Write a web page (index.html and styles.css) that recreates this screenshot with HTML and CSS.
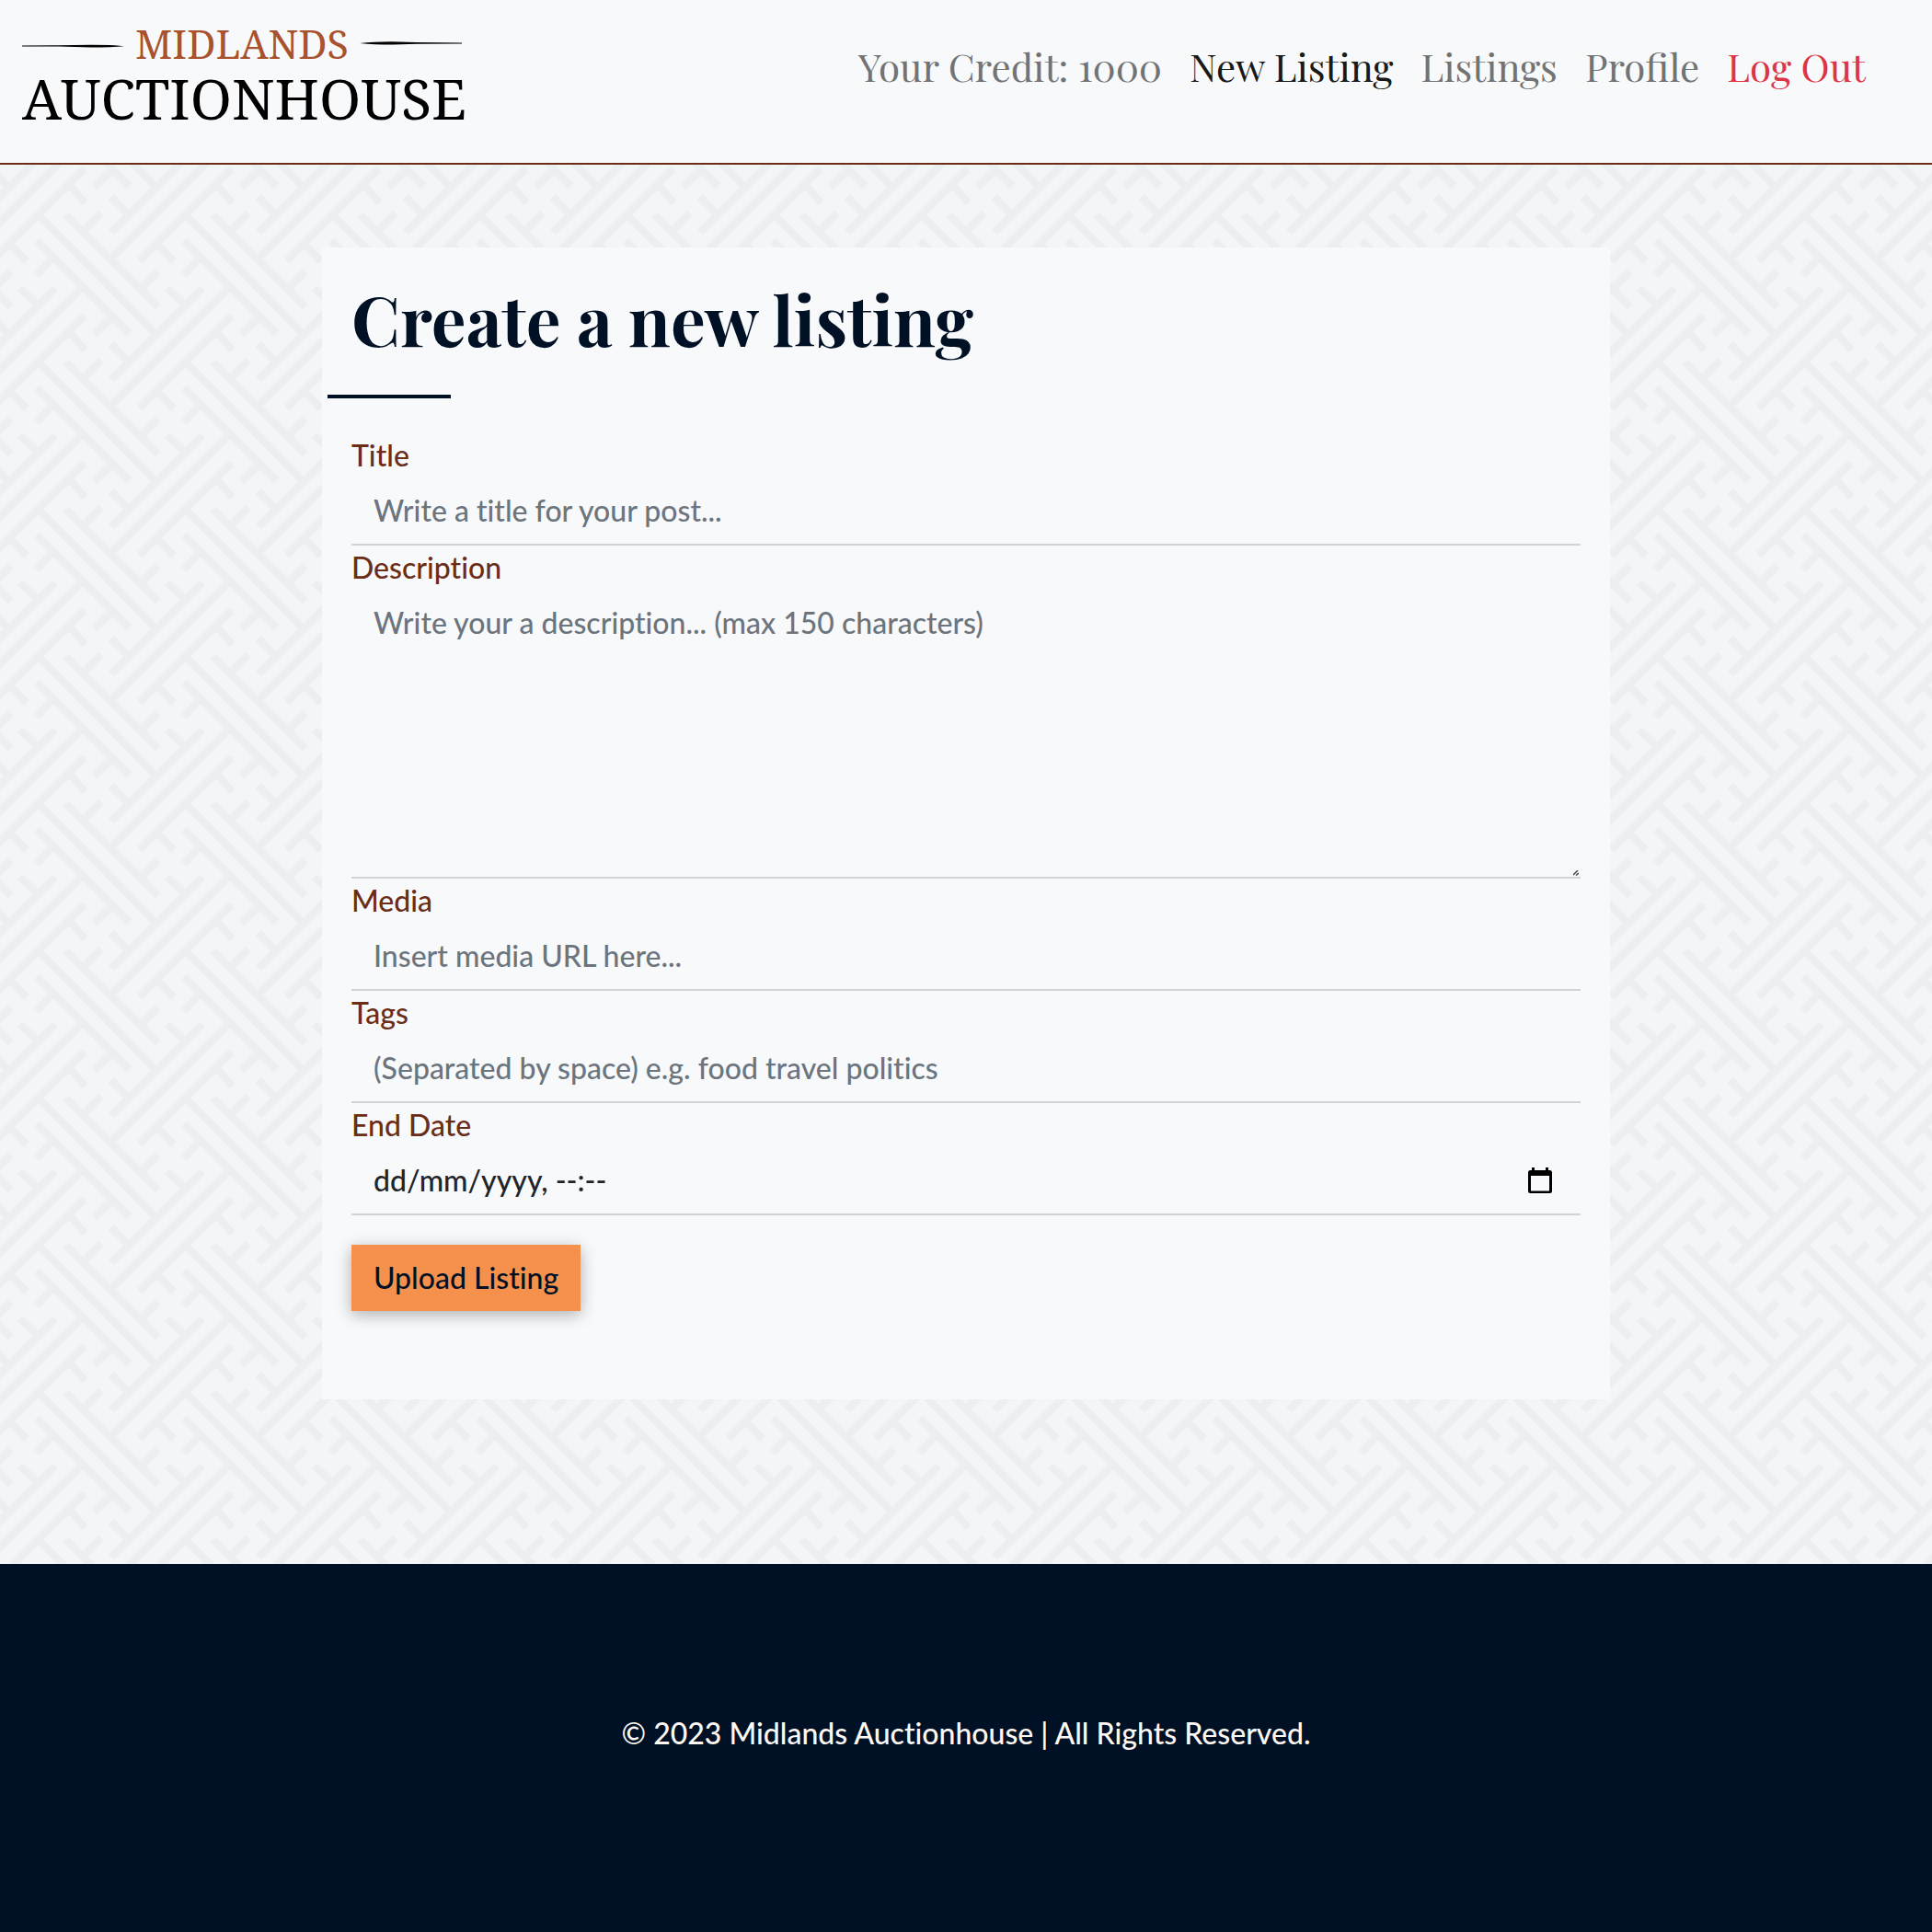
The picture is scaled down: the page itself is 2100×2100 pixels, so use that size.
FILE: index.html
```html
<!DOCTYPE html>
<html lang="en-GB">
<head>
<meta charset="utf-8">
<meta name="viewport" content="width=device-width, initial-scale=1">
<title>Midlands Auctionhouse | New Listing</title>
<link rel="stylesheet" href="styles.css">
</head>
<body>
<header class="site-header">
  <a class="logo" href="#">
    <span class="logo-top">
      <svg class="logo-rule" viewBox="0 0 111 8" aria-hidden="true"><path d="M0 5.6 L0 6.400 L40 6.600 L75 7.600 Q97 7.400 111 6.200 Q97 4.800 75 4.800 L40 5.200 Z"/></svg>
      <span class="logo-name">MIDLANDS</span>
      <svg class="logo-rule" viewBox="0 0 111 8" aria-hidden="true"><path d="M0 3 Q14 1.400 34 1.200 L62 2 L111 2.600 L111 3.400 L62 3.800 L36 4.600 Q16 4.600 0 3 Z"/></svg>
    </span>
    <span class="logo-main">AUCTIONHOUSE</span>
  </a>
  <nav class="site-nav">
    <span class="nav-item">Your Credit: 1000</span>
    <a class="nav-item nav-active" href="#">New Listing</a>
    <a class="nav-item" href="#">Listings</a>
    <a class="nav-item" href="#">Profile</a>
    <a class="nav-item nav-logout" href="#">Log Out</a>
  </nav>
</header>
<main class="page">
  <section class="card">
    <h1 class="card-title">Create a new listing</h1>
    <form class="listing-form">
      <label class="label" for="title">Title</label>
      <input class="control" id="title" type="text" placeholder="Write a title for your post...">
      <label class="label" for="description">Description</label>
      <textarea class="control control-area" id="description" placeholder="Write your a description... (max 150 characters)"></textarea>
      <label class="label" for="media">Media</label>
      <input class="control" id="media" type="text" placeholder="Insert media URL here...">
      <label class="label" for="tags">Tags</label>
      <input class="control" id="tags" type="text" placeholder="(Separated by space) e.g. food travel politics">
      <label class="label" for="end-date">End Date</label>
      <div class="date-field">
        <input class="control control-date" id="end-date" type="text" placeholder="dd/mm/yyyy, --:--">
        <button class="date-button" type="button" aria-label="Pick a date">
          <svg class="date-icon" viewBox="0 0 26 28" aria-hidden="true"><path fill-rule="evenodd" d="M4 0H7V3H19V0H22V3H23.500Q26 3 26 5.500V25.500Q26 28 23.500 28H2.500Q0 28 0 25.500V5.500Q0 3 2.500 3H4ZM3 9V25.500H23V9Z"/></svg>
        </button>
      </div>
      <button class="submit" type="submit">Upload Listing</button>
    </form>
  </section>
</main>
<footer class="site-footer">
  <p class="copyright">© 2023 Midlands Auctionhouse | All Rights Reserved.</p>
</footer>
</body>
</html>
```
FILE: styles.css
```css
* { box-sizing: border-box; }

body {
  margin: 0;
  min-height: 100vh;
  display: flex;
  flex-direction: column;
  font-family: Lato, "Liberation Sans", sans-serif;
  font-size: 32px;
  font-weight: 500;
  font-variant-ligatures: none;
  line-height: 48px;
  color: #001125;
  background-color: #f4f5f7;
  background-image: url("data:image/svg+xml,%3Csvg xmlns='http://www.w3.org/2000/svg' xmlns:xlink='http://www.w3.org/1999/xlink' width='160' height='160' viewBox='0 0 480 480'%3E%3Cdefs%3E%3Cpath id='p' fill='none' stroke='%23edeef0' stroke-width='25' d='M745 430L365 810M215 190L515 490M275 240L330 185M460 430L515 375M125 190L505 575M275 40L-25 340M225 90L277 152M515 290L567 342M660 430L363 727M545 430L600 480M362 612L415 665M120 275L422 577M172 330L120 387M365 525L308 580'/%3E%3C/defs%3E%3Cuse xlink:href='%23p'/%3E%3Cuse xlink:href='%23p' x='-480'/%3E%3Cuse xlink:href='%23p' x='480'/%3E%3Cuse xlink:href='%23p' y='-480'/%3E%3Cuse xlink:href='%23p' x='-480' y='-480'/%3E%3Cuse xlink:href='%23p' x='480' y='-480'/%3E%3C/svg%3E");
  background-position: 0 10px;
  background-size: 160px 160px;
}

a { color: inherit; text-decoration: none; }

.site-header {
  display: flex;
  justify-content: space-between;
  align-items: flex-start;
  padding: 22px 72px 38px 24px;
  background: #f8f9fb;
  border-bottom: 2px solid #6b2d17;
  font-family: "Playfair Display", "Liberation Serif", serif;
  font-weight: 400;
  font-variant-ligatures: normal;
}

.logo {
  display: flex;
  flex-direction: column;
  width: 478px;
  font-family: "Noto Serif", "Liberation Serif", serif;
  color: #000;
}

.logo-top {
  display: flex;
  justify-content: space-between;
  align-items: center;
}

.logo-rule { width: 111px; height: 8px; }

.logo-name {
  font-size: 43px;
  line-height: 52px;
  color: #a8522e;
}

.logo-main {
  font-size: 61px;
  line-height: 65px;
}

.site-nav {
  display: flex;
  flex-wrap: wrap;
  gap: 30px;
  padding-top: 20px;
  font-size: 42px;
  line-height: 60px;
  color: #727374;
}

.nav-active { color: #181919; }
.nav-logout { color: #dc3545; }

.page {
  flex: 1;
  padding: 90px 16px;
}

.card {
  width: 1400px;
  max-width: 100%;
  margin: 0 auto;
  padding: 32px 32px 96px;
  background: #f8f9fb;
}

.card-title {
  margin: 0 0 38px;
  font-family: "Playfair Display", "Liberation Serif", serif;
  font-size: 75px;
  line-height: 90px;
  font-weight: 700;
}

.card-title::after {
  content: "";
  display: block;
  width: 10%;
  height: 4px;
  margin: 38px 0 0 -26px;
  background: #001125;
}

.listing-form {
  display: flex;
  flex-direction: column;
}

.label { color: #6b2d17; }

.control {
  display: block;
  width: 100%;
  height: 74px;
  margin: 0;
  padding: 11px 24px 13px;
  border: 0;
  border-bottom: 2px solid #ced4da;
  border-radius: 0;
  background: transparent;
  font: inherit;
  color: #212529;
}

.control::placeholder { color: #6c757d; opacity: 1; }

.control-area { height: 314px; padding: 12px 24px; resize: vertical; }

.control-area::-webkit-resizer {
  background: url("data:image/svg+xml,%3Csvg xmlns='http://www.w3.org/2000/svg' width='6' height='6'%3E%3Cpath d='M0 5L5 0M3 5.500L6 3' stroke='%23444' stroke-width='1.500'/%3E%3C/svg%3E") no-repeat right 2px bottom 1px;
}

.date-field {
  display: flex;
  align-items: center;
  border-bottom: 2px solid #ced4da;
}

.control-date { flex: 1; height: 72px; border: 0; }
.control-date::placeholder { color: #212529; }

.date-button {
  display: flex;
  padding: 0 31px;
  border: 0;
  background: none;
}

.date-icon { width: 26px; height: 28px; }

.submit {
  align-self: flex-start;
  margin-top: 32px;
  padding: 12px 24px;
  border: 0;
  background: #f5914d;
  box-shadow: 0 4px 16px rgba(0, 0, 0, .3);
  font: inherit;
  color: #001125;
}

.site-footer {
  display: flex;
  align-items: center;
  justify-content: center;
  min-height: 400px;
  padding: 32px;
  background: #001125;
  color: #fff8f3;
}

.copyright { margin: 0 0 32px; text-align: center; }
```
